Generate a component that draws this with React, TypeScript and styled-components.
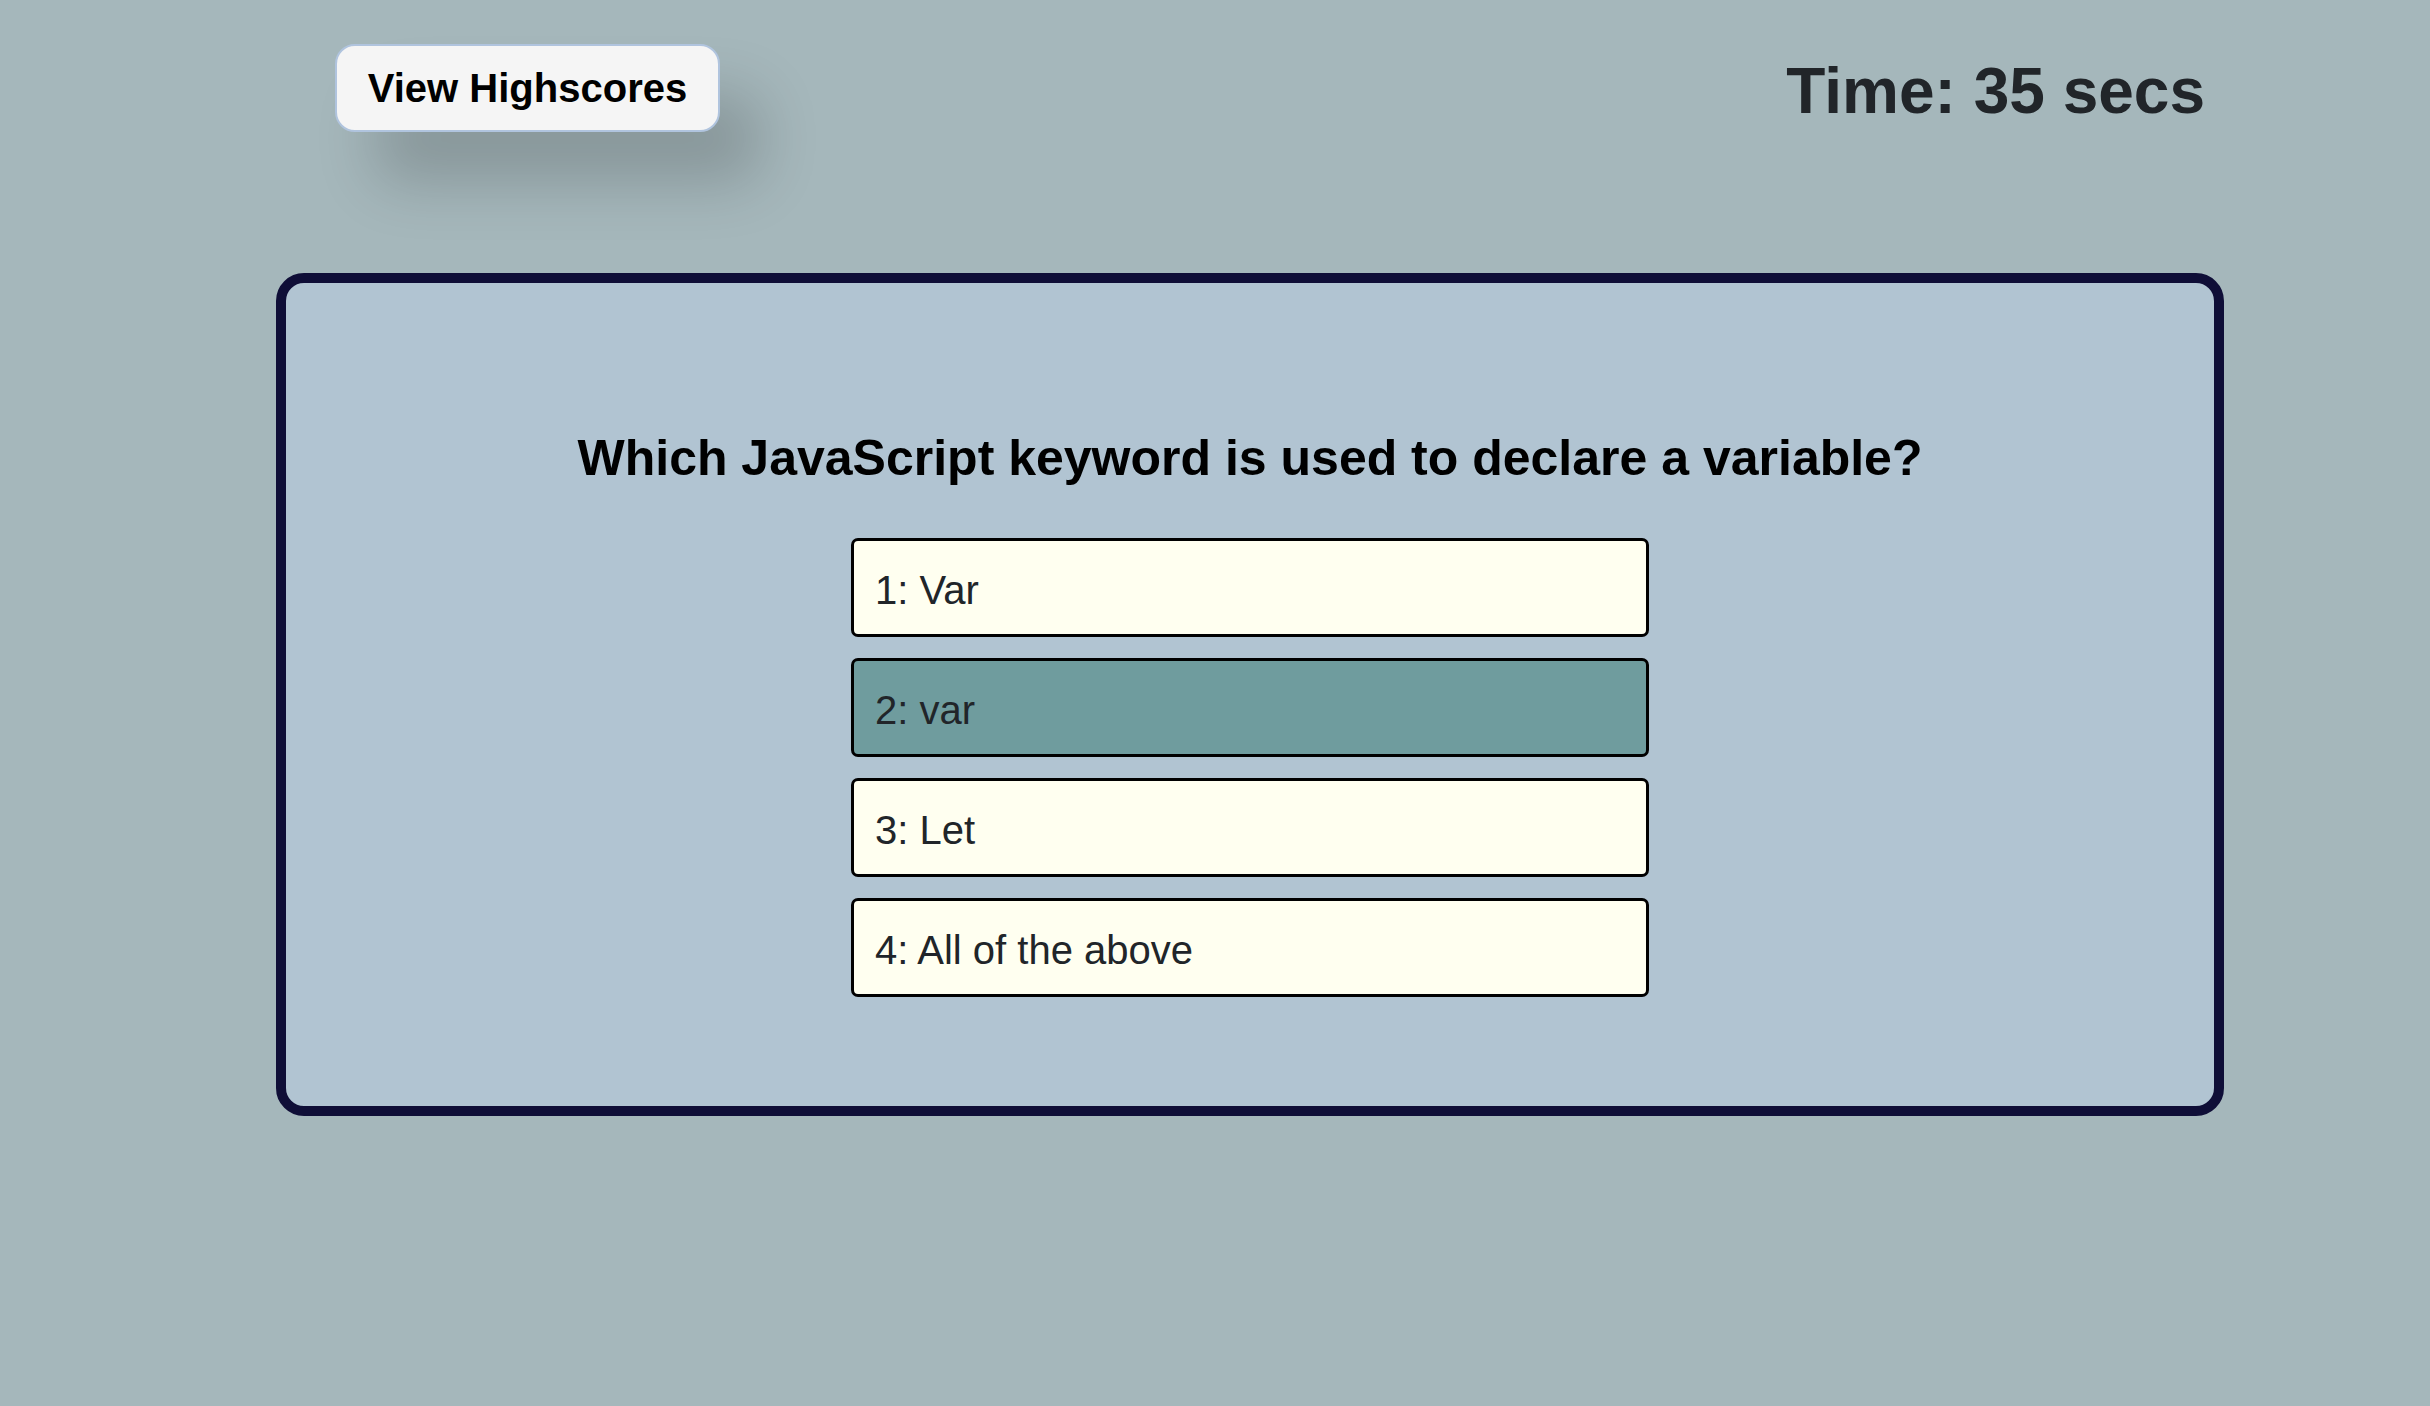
import React from "react";
import styled, { createGlobalStyle } from "styled-components";

const GlobalStyle = createGlobalStyle`
  html, body {
    margin: 0;
    padding: 0;
    background: #a5b7bb;
    font-family: "Liberation Sans", Arial, Helvetica, sans-serif;
  }
  #root {
    min-height: 1406px;
  }
`;

const Page = styled.div`
  min-height: 1406px;
  background: #a5b7bb;
  box-sizing: border-box;
  padding-top: 44px;
`;

const Header = styled.header`
  display: flex;
  justify-content: space-between;
  align-items: flex-start;
  padding: 0 225px 0 335px;
`;

const HighscoresButton = styled.button`
  box-sizing: border-box;
  width: 385px;
  height: 88px;
  display: flex;
  align-items: center;
  justify-content: center;
  background: #f5f5f5;
  border: 2px solid #b0c4de;
  border-radius: 20px;
  font-family: "Liberation Sans", Arial, sans-serif;
  font-weight: 700;
  font-size: 40px;
  color: #000;
  box-shadow: 40px 50px 60px rgba(0, 0, 0, 0.18);
  cursor: pointer;
  padding: 0;
`;

const Timer = styled.h2`
  margin: 10px 0 0;
  font-size: 64px;
  font-weight: 700;
  line-height: normal;
  color: #212529;
`;

const Card = styled.main`
  box-sizing: border-box;
  width: 1948px;
  height: 843px;
  margin: 141px 0 0 276px;
  border: 10px solid #0f0e37;
  border-radius: 28px;
  background: #b1c4d2;
  display: flex;
  flex-direction: column;
  align-items: center;
  padding-top: 146px;
`;

const Question = styled.h1`
  margin: 0;
  font-size: 50px;
  font-weight: 700;
  line-height: normal;
  color: #000;
  text-align: center;
`;

const Answers = styled.ol`
  list-style: none;
  margin: 51px 0 0;
  padding: 0;
  width: 798px;
  display: flex;
  flex-direction: column;
  gap: 21px;
`;

const Answer = styled.li<{ $active?: boolean }>`
  box-sizing: border-box;
  height: 99px;
  display: flex;
  align-items: center;
  padding: 5px 0 0 21px;
  border: 3.5px solid #000;
  border-radius: 7px;
  background: ${(p) => (p.$active ? "#6f9c9e" : "#fffff0")};
  font-size: 40px;
  color: #212529;
  cursor: pointer;
`;

const answers = ["Var", "var", "Let", "All of the above"];

export default function App() {
  return (
    <>
      <GlobalStyle />
      <Page>
        <Header>
          <HighscoresButton>View Highscores</HighscoresButton>
          <Timer>Time: 35 secs</Timer>
        </Header>
        <Card>
          <Question>Which JavaScript keyword is used to declare a variable?</Question>
          <Answers>
            {answers.map((a, i) => (
              <Answer key={a} $active={i === 1}>
                {i + 1}: {a}
              </Answer>
            ))}
          </Answers>
        </Card>
      </Page>
    </>
  );
}
